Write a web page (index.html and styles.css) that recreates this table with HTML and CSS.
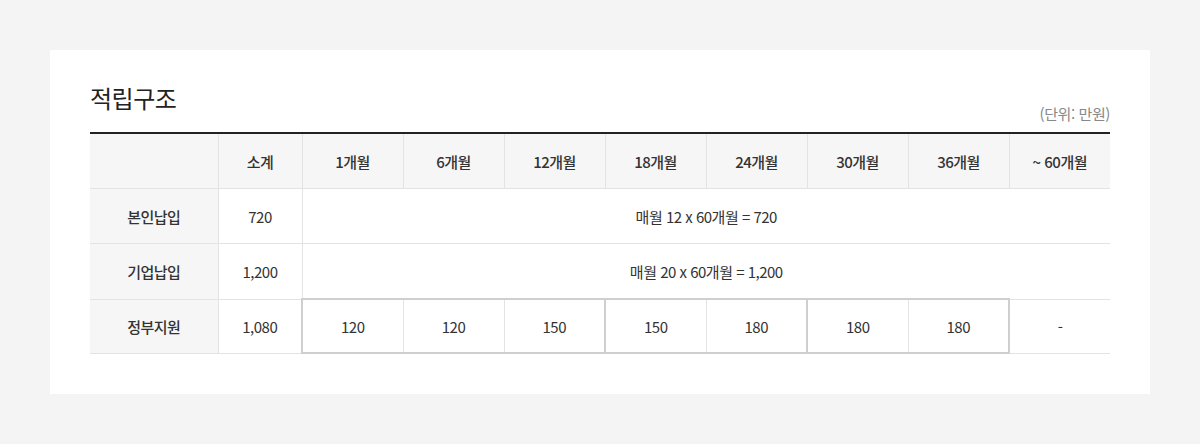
FILE: index.html
```html
<!DOCTYPE html>
<html lang="ko">
<head>
<meta charset="utf-8">
<title>적립구조</title>
<link rel="stylesheet" href="styles.css">
</head>
<body>
<section class="card">
  <div class="card-head">
    <h2 class="title">적립구조</h2>
    <span class="unit">(단위: 만원)</span>
  </div>
  <table class="plan">
    <colgroup>
      <col class="c-label"><col class="c-sum">
      <col class="c-m"><col class="c-m"><col class="c-m"><col class="c-m">
      <col class="c-m"><col class="c-m"><col class="c-m"><col class="c-m">
    </colgroup>
    <thead>
      <tr>
        <th class="lab"></th>
        <th>소계</th>
        <th>1개월</th>
        <th>6개월</th>
        <th>12개월</th>
        <th>18개월</th>
        <th>24개월</th>
        <th>30개월</th>
        <th>36개월</th>
        <th class="last">~ 60개월</th>
      </tr>
    </thead>
    <tbody>
      <tr>
        <th class="lab">본인납입</th>
        <td>720</td>
        <td colspan="8" class="last">매월 12 x 60개월 = 720</td>
      </tr>
      <tr>
        <th class="lab">기업납입</th>
        <td>1,200</td>
        <td colspan="8" class="last">매월 20 x 60개월 = 1,200</td>
      </tr>
      <tr class="gov">
        <th class="lab">정부지원</th>
        <td>1,080</td>
        <td class="g gs">120</td>
        <td class="g">120</td>
        <td class="g ge">150</td>
        <td class="g gs">150</td>
        <td class="g ge">180</td>
        <td class="g gs">180</td>
        <td class="g ge">180</td>
        <td class="last">-</td>
      </tr>
    </tbody>
  </table>
</section>
</body>
</html>
```

FILE: styles.css
```css
html, body {
  margin: 0;
  padding: 0;
}
body {
  background: #f4f4f4;
  padding: 50px;
  font-family: "Noto Sans CJK KR", "Noto Sans", sans-serif;
  color: #333;
}
.card {
  background: #fff;
  padding: 32px 40px 40px;
}
.card-head {
  display: flex;
  justify-content: space-between;
  align-items: flex-end;
  padding-bottom: 8px;
}
.title {
  margin: 0 0 10px;
  font-size: 24px;
  line-height: 32px;
  font-weight: 400;
  color: #222;
  letter-spacing: -0.5px;
}
.unit {
  font-size: 15px;
  line-height: 20px;
  color: #888;
  letter-spacing: -0.4px;
}
.plan {
  width: 1020px;
  border-collapse: collapse;
  table-layout: fixed;
  border-top: 2px solid #222;
  font-size: 15px;
  letter-spacing: -0.5px;
}
.c-label { width: 128px; }
.c-sum { width: 84px; }
.c-m { width: 101px; }
.plan th,
.plan td {
  height: 54px;
  padding: 0;
  text-align: center;
  vertical-align: middle;
  border-right: 1px solid #e3e3e3;
  border-bottom: 1px solid #e3e3e3;
  font-weight: 400;
  color: #333;
}
.plan thead th {
  background: #f6f6f6;
  font-weight: 500;
}
.plan .lab {
  background: #f6f6f6;
  font-weight: 500;
}
.plan .last {
  border-right: none;
}
.plan .gov th,
.plan .gov td {
  height: 52px;
}
.plan .g {
  border-top: 2px solid #cfcfcf;
  border-bottom: 2px solid #cfcfcf;
}
.plan .gs {
  border-left: 2px solid #cfcfcf;
}
.plan .ge {
  border-right: 2px solid #cfcfcf;
}
```
